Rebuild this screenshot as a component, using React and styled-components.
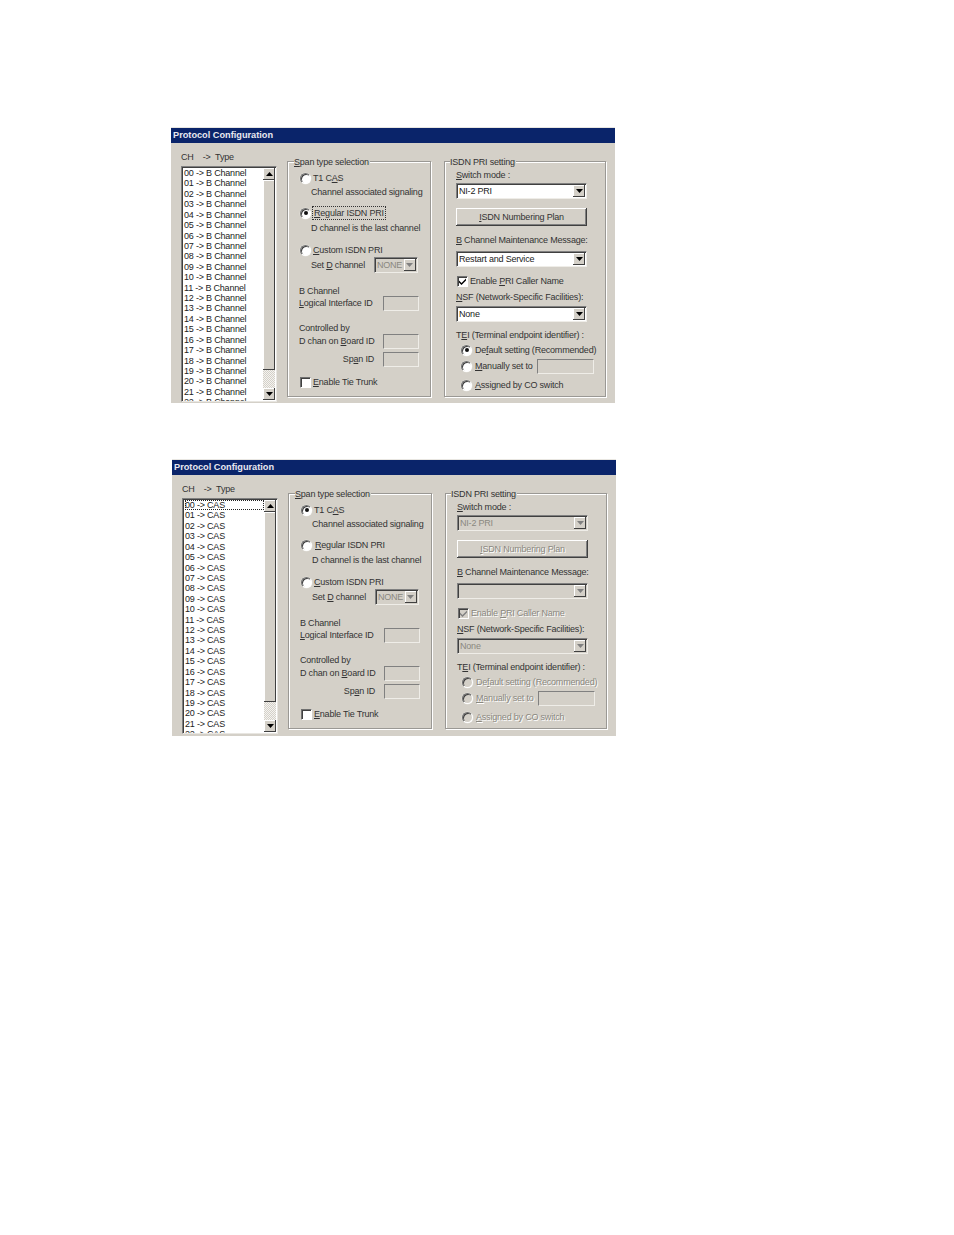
import React from 'react'
import styled, { createGlobalStyle } from 'styled-components'

const GlobalStyle = createGlobalStyle`
  html, body { margin: 0; background: #fff; }
  * { box-sizing: border-box; }
`

const Page = styled.div`
  width: 954px;
  height: 1235px;
  padding-top: 127px;
  display: flex;
  flex-direction: column;
  gap: 56px;
  font-family: "Liberation Sans", Arial, sans-serif;
  font-size: 9px;
  letter-spacing: -0.2px;
  color: #333;
`

const Dialog = styled.div`
  width: 444px;
  height: ${p => p.$height}px;
  margin-left: ${p => p.$left}px;
  background: #d4d0c8;
  overflow: hidden;
  border-top: 1px solid #e8e6e1;
`

const TitleBar = styled.div`
  height: 15px;
  padding-left: 2px;
  background: #0a246a;
  color: #e8e8f0;
  font-weight: bold;
  font-size: 9.2px;
  letter-spacing: 0;
  line-height: 15px;
`

const Body = styled.div`
  display: flex;
  align-items: flex-start;
  padding: 8px 0 0 10px;
`

const ListColumn = styled.div`
  width: 96px;
  margin-right: 10px;
`

const ListHeader = styled.div`
  height: 12px;
  margin-bottom: 3px;
  line-height: 12px;
  display: flex;
  white-space: pre;
`

const ListBox = styled.div`
  height: 236px;
  display: flex;
  overflow: hidden;
  background: #fff;
  border: 1px solid;
  border-color: #808080 #e8e6e1 #e8e6e1 #808080;
  box-shadow: inset 1px 1px 0 #404040;
`

const ListRows = styled.div`
  flex: 1;
  padding: 1px 0 0 2px;
  min-width: 0;
`

const ListRow = styled.div`
  height: 10.43px;
  line-height: 10.43px;
  white-space: pre;
  color: #222;
  outline: ${p => (p.$focus ? '1px dotted #222' : 'none')};
  outline-offset: -1px;
`

const ScrollBar = styled.div`
  width: 12px;
  height: 232px;
  margin: 1px 1px 0 0;
  display: flex;
  flex-direction: column;
  background: #d4d0c8;
`

const ScrollButton = styled.div`
  height: 12px;
  display: flex;
  align-items: center;
  justify-content: center;
  background: #d4d0c8;
  box-shadow: inset -1px -1px 0 #404040, inset 1px 1px 0 #fff;
  flex: none;
`

const ScrollThumb = styled.div`
  flex: 1;
  background: #d4d0c8;
  box-shadow: inset -1px -1px 0 #404040, inset 1px 1px 0 #fff;
`

const ScrollTrack = styled.div`
  height: 18px;
  flex: none;
  background: repeating-conic-gradient(#d4d0c8 0 25%, #f4f3f0 0 50%) 0 0 / 2px 2px;
`

const Group = styled.div`
  position: relative;
  width: ${p => p.$width}px;
  height: 236px;
  margin: 10px ${p => p.$right || 0}px 0 0;
  padding: ${p => p.$top}px 0 0 ${p => p.$pad}px;
  border: 1px solid #9a9894;
  box-shadow: 1px 1px 0 #fff, inset 1px 1px 0 #fff;
`

const Legend = styled.div`
  position: absolute;
  top: -6px;
  left: ${p => p.$left}px;
  height: 12px;
  padding: 0 1px 0 0;
  line-height: 12px;
  background: #d4d0c8;
  white-space: pre;
`

const Row = styled.div`
  height: 12px;
  margin-top: ${p => p.$gap || 0}px;
  margin-left: ${p => p.$indent || 0}px;
  width: ${p => (p.$width ? `${p.$width}px` : 'auto')};
  display: flex;
  align-items: center;
  justify-content: ${p => p.$justify || 'flex-start'};
  gap: ${p => p.$space || 0}px;
  line-height: 12px;
  white-space: pre;
  color: ${p => (p.$off ? '#8a8880' : 'inherit')};
  text-shadow: ${p => (p.$off ? '1px 1px 0 #fff' : 'none')};
`

const RadioMark = styled.span`
  position: relative;
  flex: none;
  width: 11px;
  height: 11px;
  border-radius: 50%;
  background: ${p => (p.$off ? '#d4d0c8' : '#fff')};
  border: 1px solid;
  border-color: #707070 #fff #fff #707070;
  box-shadow: inset 1px 1px 0 #404040, 0 0 0 0.5px #e4e2dc;
  &::after {
    content: '';
    display: ${p => (p.$on ? 'block' : 'none')};
    position: absolute;
    top: 2.5px;
    left: 2.5px;
    width: 4px;
    height: 4px;
    border-radius: 50%;
    background: #111;
  }
`

const CheckMark = styled.span`
  flex: none;
  width: 11px;
  height: 11px;
  display: flex;
  align-items: center;
  justify-content: center;
  background: ${p => (p.$off ? '#d4d0c8' : '#fff')};
  border: 1px solid;
  border-color: #707070 #fff #fff #707070;
  box-shadow: inset 1px 1px 0 #404040;
`

const Focus = styled.span`
  outline: 1px dotted #333;
  padding: 0 1px;
  margin-left: -1px;
`

const Select = styled.div`
  flex: none;
  width: ${p => p.$width}px;
  height: ${p => p.$height || 16}px;
  margin-top: ${p => p.$gap || 0}px;
  margin-left: ${p => p.$left || 0}px;
  display: flex;
  align-items: center;
  justify-content: space-between;
  padding: 1px 1px 1px 2px;
  background: ${p => (p.$off ? '#d4d0c8' : '#fff')};
  color: ${p => (p.$off ? '#8a8880' : '#222')};
  border: 1px solid;
  border-color: #808080 #efede8 #efede8 #808080;
  box-shadow: inset 1px 1px 0 #404040;
  line-height: 12px;
`

const SelectButton = styled.span`
  flex: none;
  width: 12px;
  height: 100%;
  display: flex;
  align-items: center;
  justify-content: center;
  background: #d4d0c8;
  box-shadow: inset -1px -1px 0 #404040, inset 1px 1px 0 #fff;
`

const Field = styled.div`
  flex: none;
  width: ${p => p.$width}px;
  height: 15px;
  border: 1px solid;
  border-color: #808080 #efede8 #efede8 #808080;
  margin-left: ${p => p.$left || 0}px;
`

const PushButton = styled.div`
  width: 131px;
  height: 18px;
  margin-top: 9px;
  display: flex;
  align-items: center;
  justify-content: center;
  background: #d4d0c8;
  box-shadow: inset -1px -1px 0 #404040, inset 1px 1px 0 #fff, inset -2px -2px 0 #808080;
  color: ${p => (p.$off ? '#8a8880' : 'inherit')};
  text-shadow: ${p => (p.$off ? '1px 1px 0 #fff' : 'none')};
`

const Arrow = ({ down = true, off }) => (
  <svg width="7" height="4" viewBox="0 0 7 4">
    <path d={down ? 'M0 0h7L3.5 4z' : 'M0 4h7L3.5 0z'} fill={off ? '#808080' : '#000'} />
  </svg>
)

const Tick = ({ off }) => (
  <svg width="9" height="9" viewBox="0 0 9 9">
    <path d="M1 3.5l2.5 2.5L8 1.5v2L3.5 8 1 5.5z" fill={off ? '#808080' : '#000'} />
  </svg>
)

const Combo = ({ value, width, off, gap, height, left }) => (
  <Select $width={width} $off={off} $gap={gap} $height={height} $left={left}>
    <span>{value}</span>
    <SelectButton><Arrow off={off} /></SelectButton>
  </Select>
)

const channels = Array.from({ length: 23 }, (_, i) => String(i).padStart(2, '0'))

const ProtocolDialog = ({ height, left, type, mode, off }) => (
  <Dialog $height={height} $left={left}>
    <TitleBar>Protocol Configuration</TitleBar>
    <Body>
      <ListColumn>
        <ListHeader>CH    -&gt;  Type</ListHeader>
        <ListBox>
          <ListRows>
            {channels.map((ch, i) => (
              <ListRow key={ch} $focus={off && i === 0}>{`${ch} -> ${type}`}</ListRow>
            ))}
          </ListRows>
          <ScrollBar>
            <ScrollButton><Arrow down={false} /></ScrollButton>
            <ScrollThumb />
            <ScrollTrack />
            <ScrollButton><Arrow /></ScrollButton>
          </ScrollBar>
        </ListBox>
      </ListColumn>

      <Group $width={144} $right={13} $top={10} $pad={12}>
        <Legend $left={6}><u>S</u>pan type selection</Legend>
        <Row $space={2}><RadioMark $on={mode === 't1'} /><span>T1 C<u>A</u>S</span></Row>
        <Row $gap={2} $indent={11}>Channel associated signaling</Row>
        <Row $gap={9} $space={3}>
          <RadioMark $on={mode === 'regular'} />
          {mode === 'regular' ? <Focus><u>R</u>egular ISDN PRI</Focus> : <span><u>R</u>egular ISDN PRI</span>}
        </Row>
        <Row $gap={3} $indent={11}>D channel is the last channel</Row>
        <Row $gap={10} $space={2}><RadioMark /><span><u>C</u>ustom ISDN PRI</span></Row>
        <Row $gap={3} $indent={11}>
          <span>Set <u>D</u> channel</span>
          <Combo value="NONE" width={44} off left={9} />
        </Row>
        <Row $gap={14} $indent={-1}>B Channel</Row>
        <Row $indent={-1} $width={120} $justify="space-between">
          <span><u>L</u>ogical Interface ID</span><Field $width={36} />
        </Row>
        <Row $gap={13} $indent={-1}>Controlled by</Row>
        <Row $gap={1} $indent={-1} $width={120} $justify="space-between">
          <span>D chan on <u>B</u>oard ID</span><Field $width={36} />
        </Row>
        <Row $gap={6} $indent={-1} $width={120} $justify="flex-end">
          <span>Sp<u>a</u>n ID</span><Field $width={36} $left={9} />
        </Row>
        <Row $gap={11} $space={2}><CheckMark /><span><u>E</u>nable Tie Trunk</span></Row>
      </Group>

      <Group $width={162} $top={7} $pad={11}>
        <Legend $left={5}>ISDN PRI setting</Legend>
        <Row><span><u>S</u>witch mode :</span></Row>
        <Combo value="NI-2 PRI" width={131} off={off} gap={2} />
        <PushButton $off={off}><span><u>I</u>SDN Numbering Plan</span></PushButton>
        <Row $gap={8}><span><u>B</u> Channel Maintenance Message:</span></Row>
        <Combo value={off ? '' : 'Restart and Service'} width={131} off={off} gap={5} />
        <Row $gap={8} $space={2} $off={off} $indent={1}>
          <CheckMark $off={off}><Tick off={off} /></CheckMark>
          <span>Enable <u>P</u>RI Caller Name</span>
        </Row>
        <Row $gap={4}><span><u>N</u>SF (Network-Specific Facilities):</span></Row>
        <Combo value="None" width={131} off={off} gap={3} />
        <Row $gap={7}><span>T<u>E</u>I (Terminal endpoint identifier) :</span></Row>
        <Row $gap={3} $indent={5} $space={3} $off={off}>
          <RadioMark $off={off} $on={!off} /><span>De<u>f</u>ault setting (Recommended)</span>
        </Row>
        <Row $gap={4} $indent={5} $space={3} $off={off}>
          <RadioMark $off={off} /><span><u>M</u>anually set to</span><Field $width={57} $left={1} />
        </Row>
        <Row $gap={7} $indent={5} $space={3} $off={off}>
          <RadioMark $off={off} /><span><u>A</u>ssigned by CO switch</span>
        </Row>
      </Group>
    </Body>
  </Dialog>
)

export default function App() {
  return (
    <Page>
      <GlobalStyle />
      <ProtocolDialog height={276} left={171} type="B Channel" mode="regular" />
      <ProtocolDialog height={277} left={172} type="CAS" mode="t1" off />
    </Page>
  )
}
